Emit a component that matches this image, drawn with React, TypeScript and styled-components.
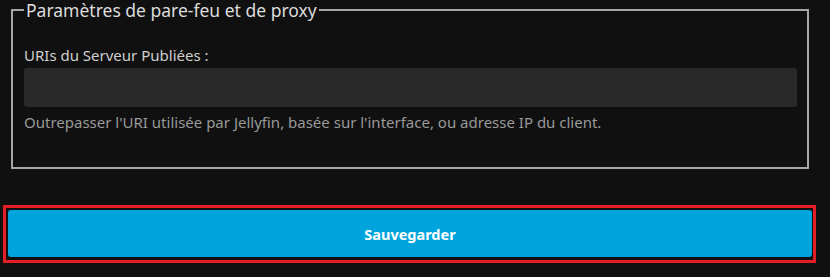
import React from 'react';
import styled, { createGlobalStyle } from 'styled-components';

const GlobalStyle = createGlobalStyle`
  html, body {
    margin: 0;
    padding: 0;
    background: #101010;
    font-family: "Noto Sans", "Open Sans", sans-serif;
  }
`;

const Page = styled.div`
  width: 830px;
  height: 277px;
  overflow: hidden;
`;

const FieldSet = styled.fieldset`
  margin: 0 0 0 11px;
  width: 798px;
  height: 169px;
  box-sizing: border-box;
  border: 2px solid #a6a6a6;
  padding: 0 10px 0 11px;
`;

const Legend = styled.legend`
  padding: 0 2px;
  font-size: 17.5px;
  line-height: 20px;
  color: #dcdcdc;
`;

const Label = styled.label`
  display: block;
  margin-top: 25px;
  font-size: 15px;
  line-height: 20px;
  color: #cfcfcf;
`;

const TextInput = styled.input`
  display: block;
  width: 100%;
  height: 39px;
  margin-top: 3px;
  box-sizing: border-box;
  border: none;
  border-radius: 3px;
  background: #292929;
  color: #fff;
  outline: none;
  font-family: inherit;
  font-size: 15px;
  padding: 0 8px;
`;

const Description = styled.div`
  margin-top: 5px;
  font-size: 15px;
  line-height: 20px;
  color: #999;
`;

const FocusRing = styled.div`
  margin: 36px 0 0 3px;
  width: 813px;
  box-sizing: border-box;
  border: 3px solid #e41e26;
  padding: 2px 1px 3px 2px;
`;

const SaveButton = styled.button`
  display: block;
  width: 100%;
  height: 47px;
  border: none;
  border-radius: 3px;
  background: #00a4dc;
  color: #fff;
  font-family: inherit;
  font-weight: 700;
  font-size: 14.5px;
  cursor: pointer;
`;

export default function App() {
  return (
    <>
      <GlobalStyle />
      <Page>
        <FieldSet>
          <Legend>Paramètres de pare-feu et de proxy</Legend>
          <Label htmlFor="publishedUris">URIs du Serveur Publiées :</Label>
          <TextInput id="publishedUris" type="text" />
          <Description>
            Outrepasser l'URI utilisée par Jellyfin, basée sur l'interface, ou adresse IP du client.
          </Description>
        </FieldSet>
        <FocusRing>
          <SaveButton type="button">Sauvegarder</SaveButton>
        </FocusRing>
      </Page>
    </>
  );
}
